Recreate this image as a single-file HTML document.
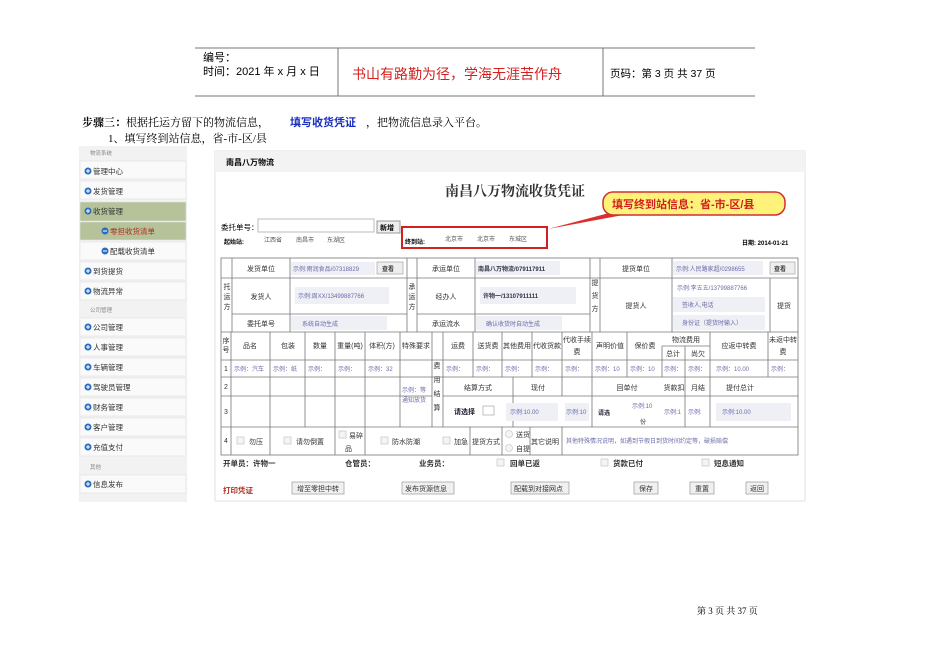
<!DOCTYPE html>
<html><head><meta charset="utf-8"><style>
html,body{margin:0;padding:0;background:#fff;width:950px;height:672px;overflow:hidden}
svg{display:block}
text{font-family:"Liberation Sans","Noto Sans CJK SC",sans-serif}
.s{font-family:"Liberation Serif","Noto Serif CJK SC",serif}
</style></head><body>
<svg width="950" height="672" viewBox="0 0 950 672" xmlns="http://www.w3.org/2000/svg">
<g stroke="#777" stroke-width="1">
<line x1="195" y1="48" x2="755" y2="48"/><line x1="195" y1="96" x2="755" y2="96"/>
<line x1="338" y1="48" x2="338" y2="96"/><line x1="603" y1="48" x2="603" y2="96"/>
</g>
<text x="203" y="61" font-size="11">编号：</text>
<text x="203" y="75" font-size="11">时间：2021 年 x 月 x 日</text>
<text x="352" y="79" font-size="14" fill="#d42020">书山有路勤为径，学海无涯苦作舟</text>
<text x="610" y="77" font-size="10.5">页码：第 3 页  共 37 页</text>
<text x="82" y="126" font-size="11" class="s"><tspan font-weight="bold">步骤三：</tspan>根据托运方留下的物流信息，</text>
<text x="290" y="126" font-size="11" fill="#1a2fc0" font-weight="bold">填写收货凭证</text>
<text x="366" y="126" font-size="11" class="s">，把物流信息录入平台。</text>
<text x="108" y="142" font-size="11" class="s">1、填写终到站信息，省-市-区/县</text>
<rect x="79" y="146" width="108" height="356" fill="#f2f2f2"/>
<g font-size="7.5" fill="#333" stroke="#e2e2e2" stroke-width=".6">
<rect x="80" y="161" width="106" height="18" fill="#fafafa"/>
<rect x="80" y="181" width="106" height="18" fill="#fafafa"/>
<rect x="80" y="202" width="106" height="19" fill="#b5c29a"/>
<rect x="80" y="222" width="106" height="18" fill="#b5c29a"/>
<rect x="80" y="242" width="106" height="18" fill="#fafafa"/>
<rect x="80" y="262" width="106" height="18" fill="#fafafa"/>
<rect x="80" y="282" width="106" height="18" fill="#fafafa"/>
<rect x="80" y="318" width="106" height="18" fill="#fafafa"/>
<rect x="80" y="338" width="106" height="18" fill="#fafafa"/>
<rect x="80" y="358" width="106" height="18" fill="#fafafa"/>
<rect x="80" y="378" width="106" height="18" fill="#fafafa"/>
<rect x="80" y="398" width="106" height="18" fill="#fafafa"/>
<rect x="80" y="418" width="106" height="18" fill="#fafafa"/>
<rect x="80" y="438" width="106" height="18" fill="#fafafa"/>
<rect x="80" y="475" width="106" height="18" fill="#fafafa"/>
</g>
<text x="90" y="155" font-size="5.5" fill="#888">物流系统</text>
<text x="90" y="312" font-size="5.5" fill="#888">公司管理</text>
<text x="90" y="469" font-size="5.5" fill="#888">其他</text>
<g font-size="7.5" fill="#333">
<circle cx="88" cy="171" r="3.5" fill="#2a6cc0"/><text x="93" y="174">管理中心</text>
<circle cx="88" cy="191" r="3.5" fill="#2a6cc0"/><text x="93" y="194">发货管理</text>
<circle cx="88" cy="211" r="3.5" fill="#2a6cc0"/><text x="93" y="214">收货管理</text>
<circle cx="105" cy="231" r="3.5" fill="#2a6cc0"/><text x="110" y="234" fill="#b03020">零担收货清单</text>
<circle cx="105" cy="251" r="3.5" fill="#2a6cc0"/><text x="110" y="254">配载收货清单</text>
<circle cx="88" cy="271" r="3.5" fill="#2a6cc0"/><text x="93" y="274">到货提货</text>
<circle cx="88" cy="291" r="3.5" fill="#2a6cc0"/><text x="93" y="294">物流异常</text>
<circle cx="88" cy="327" r="3.5" fill="#2a6cc0"/><text x="93" y="330">公司管理</text>
<circle cx="88" cy="347" r="3.5" fill="#2a6cc0"/><text x="93" y="350">人事管理</text>
<circle cx="88" cy="367" r="3.5" fill="#2a6cc0"/><text x="93" y="370">车辆管理</text>
<circle cx="88" cy="387" r="3.5" fill="#2a6cc0"/><text x="93" y="390">驾驶员管理</text>
<circle cx="88" cy="407" r="3.5" fill="#2a6cc0"/><text x="93" y="410">财务管理</text>
<circle cx="88" cy="427" r="3.5" fill="#2a6cc0"/><text x="93" y="430">客户管理</text>
<circle cx="88" cy="447" r="3.5" fill="#2a6cc0"/><text x="93" y="450">充值支付</text>
<circle cx="88" cy="484" r="3.5" fill="#2a6cc0"/><text x="93" y="487">信息发布</text>
</g>
<g stroke="#fff" stroke-width="1">
<path d="M86 171h4M88 169v4M86 191h4M88 189v4M86 211h4M88 209v4M86 271h4M88 269v4M86 291h4M88 289v4M86 327h4M88 325v4M86 347h4M88 345v4M86 367h4M88 365v4M86 387h4M88 385v4M86 407h4M88 405v4M86 427h4M88 425v4M86 447h4M88 445v4M86 484h4M88 482v4M103 231h4M103 251h4"/>
</g>
<rect x="215" y="151" width="590" height="350" fill="#fff" stroke="#e2e2e2"/>
<rect x="215" y="151" width="590" height="21" fill="#f3f3f3"/>
<text x="226" y="165" font-size="8" font-weight="bold">南昌八万物流</text>
<text x="445" y="196" font-size="14" font-weight="bold" class="s" fill="#333">南昌八万物流收货凭证</text>
<polygon points="548,229 640,205 650,210" fill="#d83030"/>
<rect x="603" y="192" width="182" height="23" rx="10" fill="#fff27a" stroke="#d03030" stroke-width="1.5"/>
<text x="612" y="208" font-size="11" font-weight="bold" fill="#d02020">填写终到站信息：省-市-区/县</text>
<text x="221" y="230" font-size="7.5">委托单号：</text>
<rect x="258" y="219" width="116" height="13" fill="#fff" stroke="#bbb"/>
<rect x="377" y="221" width="23" height="12" fill="#eee" stroke="#999"/><text x="380" y="230" font-size="7" font-weight="bold">新增</text>
<text x="224" y="244" font-size="6" font-weight="bold">起始站:</text>
<text x="264" y="242" font-size="6" fill="#555">江西省</text><text x="296" y="242" font-size="6" fill="#555">南昌市</text><text x="327" y="242" font-size="6" fill="#555">东湖区</text>
<rect x="402" y="227" width="145" height="21" fill="none" stroke="#d02020" stroke-width="2"/>
<text x="405" y="244" font-size="6" font-weight="bold">终到站:</text>
<text x="445" y="241" font-size="6" fill="#555">北京市</text><text x="477" y="241" font-size="6" fill="#555">北京市</text><text x="509" y="241" font-size="6" fill="#555">东城区</text>
<text x="742" y="245" font-size="6" font-weight="bold">日期: 2014-01-21</text>
<g stroke="#777" stroke-width="0.8" fill="none">
<rect x="221" y="258" width="577" height="197"/>
<line x1="221" y1="278" x2="798" y2="278"/><line x1="232" y1="314" x2="407" y2="314"/><line x1="417" y1="314" x2="590" y2="314"/>
<line x1="221" y1="332" x2="798" y2="332"/><line x1="221" y1="360" x2="798" y2="360"/><line x1="221" y1="377" x2="798" y2="377"/>
<line x1="221" y1="396" x2="432" y2="396"/><line x1="443" y1="396" x2="798" y2="396"/><line x1="221" y1="427" x2="798" y2="427"/>
<line x1="232" y1="258" x2="232" y2="332"/><line x1="290" y1="258" x2="290" y2="332"/><line x1="407" y1="258" x2="407" y2="332"/>
<line x1="417" y1="258" x2="417" y2="332"/><line x1="475" y1="258" x2="475" y2="332"/><line x1="590" y1="258" x2="590" y2="332"/>
<line x1="600" y1="258" x2="600" y2="332"/><line x1="672" y1="258" x2="672" y2="332"/><line x1="770" y1="278" x2="770" y2="332"/>
<line x1="231" y1="332" x2="231" y2="455"/>
<line x1="270" y1="332" x2="270" y2="427"/><line x1="305" y1="332" x2="305" y2="427"/><line x1="335" y1="332" x2="335" y2="455"/>
<line x1="365" y1="332" x2="365" y2="455"/><line x1="400" y1="332" x2="400" y2="427"/><line x1="432" y1="332" x2="432" y2="427"/>
<line x1="443" y1="332" x2="443" y2="427"/><line x1="473" y1="332" x2="473" y2="377"/><line x1="502" y1="332" x2="502" y2="377"/>
<line x1="532" y1="332" x2="532" y2="377"/><line x1="562" y1="332" x2="562" y2="377"/><line x1="592" y1="332" x2="592" y2="377"/>
<line x1="627" y1="332" x2="627" y2="377"/><line x1="662" y1="346" x2="662" y2="377"/><line x1="685" y1="346" x2="685" y2="377"/>
<line x1="662" y1="346" x2="710" y2="346"/><line x1="710" y1="332" x2="710" y2="427"/><line x1="768" y1="332" x2="768" y2="377"/>
<line x1="513" y1="377" x2="513" y2="427"/><line x1="562" y1="377" x2="562" y2="396"/><line x1="592" y1="377" x2="592" y2="427"/>
<line x1="685" y1="377" x2="685" y2="427"/>
<line x1="270" y1="427" x2="270" y2="455"/><line x1="470" y1="427" x2="470" y2="455"/><line x1="502" y1="427" x2="502" y2="455"/><line x1="530" y1="427" x2="530" y2="455"/><line x1="562" y1="427" x2="562" y2="455"/>
</g>
<g font-size="7" fill="#333" text-anchor="middle">
<text x="261" y="271">发货单位</text><text x="261" y="299">发货人</text><text x="261" y="326">委托单号</text>
<text x="446" y="271">承运单位</text><text x="446" y="299">经办人</text><text x="446" y="326">承运流水</text>
<text x="636" y="271">提货单位</text><text x="636" y="308">提货人</text><text x="784" y="308">提货</text>
<text x="227" y="289">托</text><text x="227" y="299">运</text><text x="227" y="309">方</text>
<text x="412" y="289">承</text><text x="412" y="299">运</text><text x="412" y="309">方</text>
<text x="595" y="285">提</text><text x="595" y="298">货</text><text x="595" y="311">方</text>
<text x="226" y="343">序</text><text x="226" y="352">号</text>
<text x="250" y="348">品名</text><text x="288" y="348">包装</text><text x="320" y="348">数量</text><text x="350" y="348">重量(吨)</text><text x="382" y="348">体积(方)</text><text x="416" y="348">特殊要求</text>
<text x="458" y="348">运费</text><text x="488" y="348">送货费</text><text x="517" y="348">其他费用</text><text x="547" y="348">代收货款</text>
<text x="577" y="342">代收手续</text><text x="577" y="354">费</text><text x="610" y="348">声明价值</text><text x="645" y="348">保价费</text>
<text x="686" y="342">物流费用</text><text x="673" y="356">总计</text><text x="698" y="356">尚欠</text><text x="739" y="348">应返中转费</text>
<text x="783" y="342">未返中转</text><text x="783" y="354">费</text>
<text x="437" y="368">费</text><text x="437" y="382">用</text><text x="437" y="396">结</text><text x="437" y="410">算</text>
<text x="478" y="390">结算方式</text><text x="538" y="390">现付</text><text x="627" y="390">回单付</text><text x="674" y="390">货款扣</text><text x="698" y="390">月结</text><text x="740" y="390">提付总计</text>
<text x="226" y="371">1</text><text x="226" y="389">2</text><text x="226" y="414">3</text><text x="226" y="443">4</text>
</g>
<g font-size="6" fill="#6a6aa8">
<rect x="291" y="262" width="84" height="13" fill="#eef0f6"/><text x="293" y="271">示例:雨润食品/07318829</text>
<rect x="377" y="262" width="26" height="12" fill="#eee" stroke="#999" stroke-width=".6"/><text x="382" y="271" fill="#333" font-weight="bold">查看</text>
<rect x="295" y="287" width="94" height="17" fill="#eef0f6"/><text x="298" y="298">示例:周XX/13499887766</text>
<rect x="291" y="316" width="96" height="14" fill="#eef0f6"/><text x="302" y="326">系统自动生成</text>
<rect x="476" y="261" width="84" height="14" fill="#eef0f6"/><text x="478" y="271" fill="#334" font-weight="bold">南昌八万物流/079117911</text>
<rect x="480" y="287" width="96" height="17" fill="#eef0f6"/><text x="483" y="298" fill="#334" font-weight="bold">许物一/13107911111</text>
<rect x="476" y="316" width="86" height="14" fill="#eef0f6"/><text x="486" y="326">确认收货时自动生成</text>
<rect x="673" y="261" width="90" height="14" fill="#eef0f6"/><text x="676" y="271">示例:人民路家超/0298655</text>
<rect x="770" y="262" width="25" height="12" fill="#eee" stroke="#999" stroke-width=".6"/><text x="774" y="271" fill="#333" font-weight="bold">查看</text>
<text x="677" y="290">示例:李五五/13799887766</text>
<rect x="673" y="297" width="92" height="15" fill="#eef0f6"/><text x="682" y="307">签收人,电话</text>
<rect x="673" y="315" width="92" height="15" fill="#eef0f6"/><text x="682" y="325">身份证（提货时输入）</text>
<text x="234" y="371">示例：汽车</text><text x="273" y="371">示例：纸</text><text x="308" y="371">示例：</text><text x="338" y="371">示例：</text><text x="368" y="371">示例：32</text>
<text x="402" y="392">示例：等</text><text x="402" y="402">通知放货</text>
<text x="446" y="371">示例：</text><text x="476" y="371">示例：</text><text x="505" y="371">示例：</text><text x="535" y="371">示例：</text><text x="565" y="371">示例：</text>
<text x="595" y="371">示例：10</text><text x="630" y="371">示例：10</text><text x="664" y="371">示例：</text><text x="688" y="371">示例：</text><text x="716" y="371">示例：10.00</text><text x="771" y="371">示例：</text>
<text x="454" y="414" fill="#223" font-weight="bold" font-size="7">请选择</text>
<rect x="483" y="406" width="11" height="9" fill="#fff" stroke="#999" stroke-width=".6"/>
<rect x="506" y="403" width="52" height="18" fill="#eef0f6"/><text x="510" y="414">示例:10.00</text>
<rect x="565" y="403" width="24" height="18" fill="#eef0f6"/><text x="566" y="414">示例:10</text>
<text x="598" y="415" fill="#223" font-weight="bold">请选</text>
<text x="632" y="408">示例:10</text><text x="640" y="424" fill="#333">份</text>
<text x="664" y="414">示例:1</text><text x="688" y="414">示例:</text>
<rect x="716" y="403" width="75" height="18" fill="#eef0f6"/><text x="722" y="414">示例:10.00</text>
<text x="566" y="443">其他特殊情况说明，如遇到节假日到货时间约定等，破损赔偿</text>
</g>
<g font-size="7" fill="#333">
<rect x="237" y="437" width="7" height="7" fill="#f4f4f4" stroke="#bbb" stroke-width=".6"/><text x="249" y="444">勿压</text>
<rect x="284" y="437" width="7" height="7" fill="#f4f4f4" stroke="#bbb" stroke-width=".6"/><text x="296" y="444">请勿倒置</text>
<rect x="339" y="431" width="7" height="7" fill="#f4f4f4" stroke="#bbb" stroke-width=".6"/><text x="349" y="438">易碎</text><text x="345" y="451">品</text>
<rect x="381" y="437" width="7" height="7" fill="#f4f4f4" stroke="#bbb" stroke-width=".6"/><text x="392" y="444">防水防潮</text>
<rect x="443" y="437" width="7" height="7" fill="#f4f4f4" stroke="#bbb" stroke-width=".6"/><text x="454" y="444">加急</text>
<text x="472" y="444">提货方式</text>
<circle cx="509" cy="434" r="3.5" fill="#f4f4f4" stroke="#bbb" stroke-width=".6"/><text x="516" y="437">送货</text>
<circle cx="509" cy="448" r="3.5" fill="#f4f4f4" stroke="#bbb" stroke-width=".6"/><text x="516" y="451">自提</text>
<text x="531" y="444">其它说明</text>
</g>
<g font-size="7.5" font-weight="bold" fill="#333">
<text x="223" y="466">开单员：许物一</text><text x="345" y="466">仓管员：</text><text x="419" y="466">业务员：</text>
<rect x="497" y="459" width="7" height="7" fill="#f4f4f4" stroke="#bbb" stroke-width=".6"/><text x="510" y="466">回单已返</text>
<rect x="601" y="459" width="7" height="7" fill="#f4f4f4" stroke="#bbb" stroke-width=".6"/><text x="613" y="466">货款已付</text>
<rect x="702" y="459" width="7" height="7" fill="#f4f4f4" stroke="#bbb" stroke-width=".6"/><text x="714" y="466">短息通知</text>
<text x="223" y="493" fill="#b03020">打印凭证</text>
</g>
<g font-size="7" fill="#333" stroke-width=".7">
<rect x="292" y="482" width="52" height="12" fill="#f0f0f0" stroke="#999"/><text x="297" y="491">增至零担中转</text>
<rect x="402" y="482" width="52" height="12" fill="#f0f0f0" stroke="#999"/><text x="405" y="491">发布货源信息</text>
<rect x="511" y="482" width="58" height="12" fill="#f0f0f0" stroke="#999"/><text x="514" y="491">配载到对接网点</text>
<rect x="634" y="482" width="24" height="12" fill="#f0f0f0" stroke="#999"/><text x="639" y="491">保存</text>
<rect x="690" y="482" width="24" height="12" fill="#f0f0f0" stroke="#999"/><text x="695" y="491">重置</text>
<rect x="746" y="482" width="22" height="12" fill="#f0f0f0" stroke="#999"/><text x="750" y="491">返回</text>
</g>
<text x="697" y="614" font-size="9" class="s">第 3 页 共 37 页</text>
</svg>
</body></html>
